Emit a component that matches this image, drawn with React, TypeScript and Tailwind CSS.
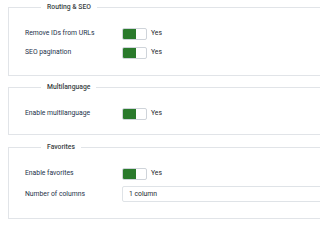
import React from "react";

const font = { fontFamily: "Roboto, 'Liberation Sans', sans-serif" };

function Toggle() {
  return (
    <div className="flex items-center">
      <div className="flex h-[12px] w-[25px] overflow-hidden rounded-[2px] border border-[#cfd4da] bg-white">
        <div className="h-full w-[13px] bg-[#2a7a2c]" />
      </div>
      <span className="ml-[4px] text-[6.8px] text-[#22262a]">Yes</span>
    </div>
  );
}

function Row({ label, children, h = "h-[19px]" }: { label: string; children: React.ReactNode; h?: string }) {
  return (
    <div className={`flex items-center ${h}`}>
      <div className="w-[97px] shrink-0 text-[6.8px] text-[#23304a]">{label}</div>
      <div className="flex-1">{children}</div>
    </div>
  );
}

function Fieldset({ title, children, className = "" }: { title: string; children: React.ReactNode; className?: string }) {
  return (
    <fieldset className={`min-w-0 border border-[#e1e4e8] pl-[16px] pr-0 pt-[11px] ${className}`}>
      <legend className="ml-[16px] px-[6px] text-[6.8px] font-medium leading-[12px] text-[#3a3f44]">{title}</legend>
      {children}
    </fieldset>
  );
}

export default function App() {
  return (
    <div className="h-[223px] w-full overflow-hidden bg-white" style={font}>
      <div className="w-[360px] pl-[8px] pt-[1px]">
        <Fieldset title="Routing & SEO" className="pb-[13px]">
          <Row label="Remove IDs from URLs"><Toggle /></Row>
          <Row label="SEO pagination"><Toggle /></Row>
        </Fieldset>
        <Fieldset title="Multilanguage" className="mt-[5px] pb-[11px]">
          <Row label="Enable multilanguage"><Toggle /></Row>
        </Fieldset>
        <Fieldset title="Favorites" className="mt-[6px] pb-[13px]">
          <Row label="Enable favorites"><Toggle /></Row>
          <Row label="Number of columns" h="h-[22px]">
            <div className="flex h-[16px] items-center rounded-[2px] border border-[#dfe3e7] bg-white pl-[6px] text-[6.8px] text-[#22262a]">
              1 column
            </div>
          </Row>
        </Fieldset>
      </div>
    </div>
  );
}
